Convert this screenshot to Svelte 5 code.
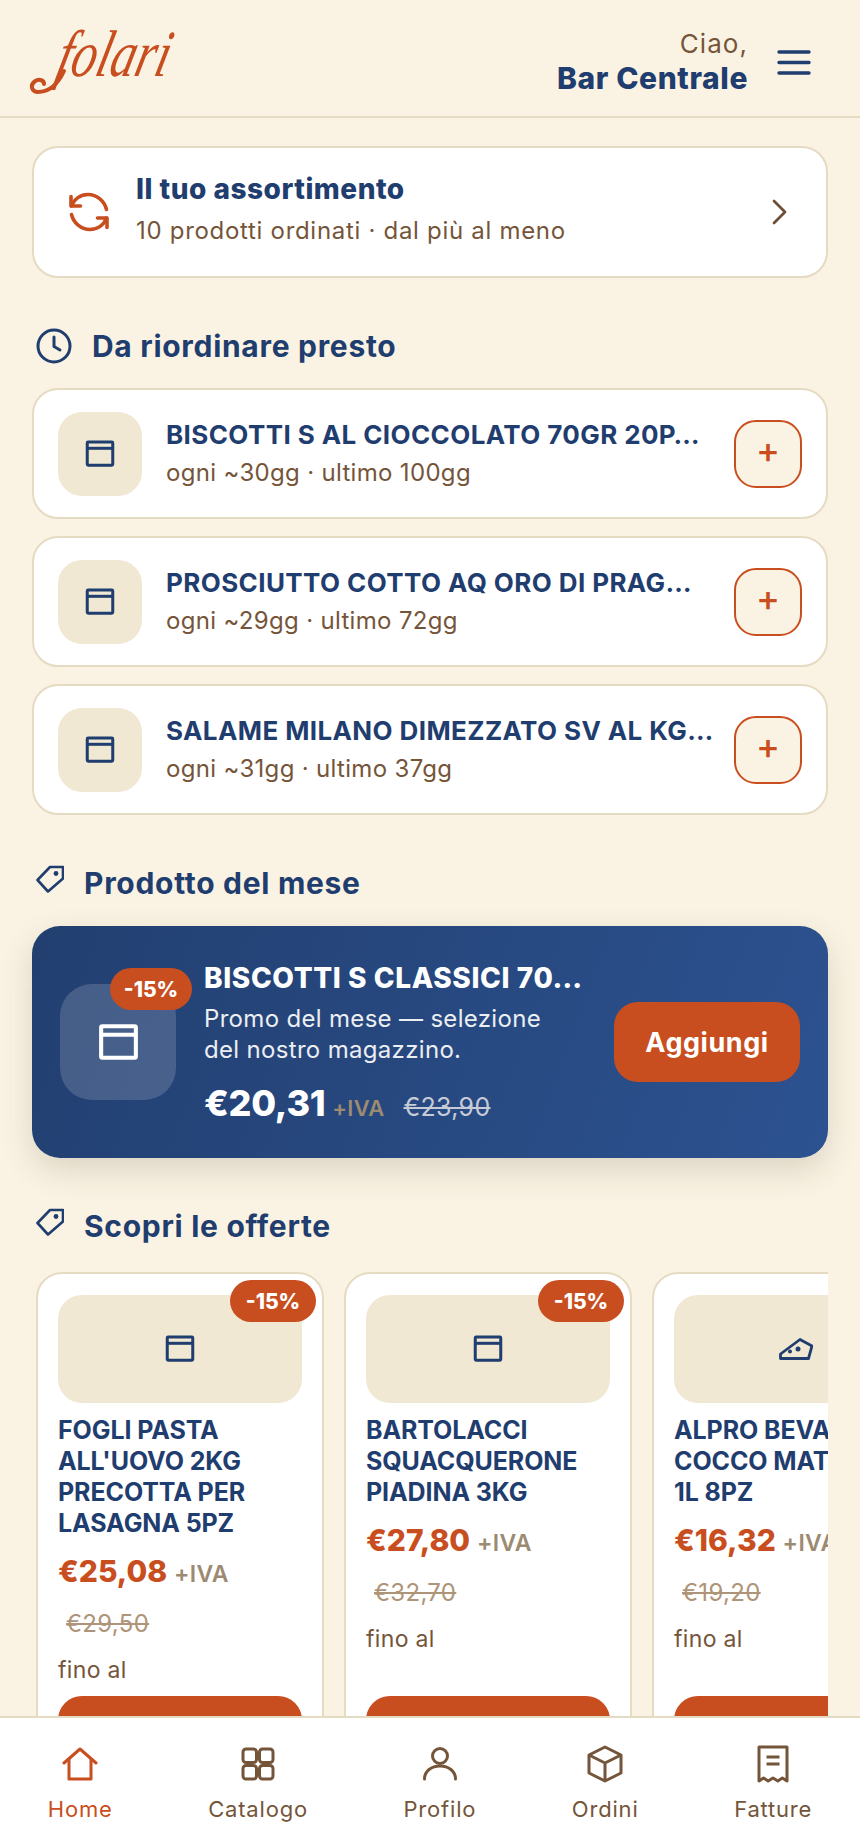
<script>
const reorder = [
  { name: "BISCOTTI S AL CIOCCOLATO 70GR 20P…", sub: "ogni ~30gg · ultimo 100gg" },
  { name: "PROSCIUTTO COTTO AQ ORO DI PRAG…", sub: "ogni ~29gg · ultimo 72gg" },
  { name: "SALAME MILANO DIMEZZATO SV AL KG…", sub: "ogni ~31gg · ultimo 37gg" }
];
const offers = [
  { name: "FOGLI PASTA ALL'UOVO 2KG PRECOTTA PER LASAGNA 5PZ", price: "€25,08", old: "€29,50", badge: "-15%", icon: "box" },
  { name: "BARTOLACCI SQUACQUERONE PIADINA 3KG", price: "€27,80", old: "€32,70", badge: "-15%", icon: "box" },
  { name: "ALPRO BEVANDA COCCO MATERIA 1L\u00a08PZ", price: "€16,32", old: "€19,20", badge: "", icon: "cheese" }
];
</script>

{#snippet box(size)}
  <svg width={size} height={size} viewBox="0 0 24 24" fill="none" stroke="currentColor" stroke-width="2" stroke-linejoin="round"><rect x="3.5" y="4" width="17" height="15.500" rx="0.6"/><path d="M3.500 8.200h17"/></svg>
{/snippet}

{#snippet tag()}
  <svg width="28" height="28" viewBox="0 0 28 28" fill="none" stroke="currentColor" stroke-width="2.6" stroke-linejoin="round"><path d="M27 2H14L1.5 15 12 26.5 27 13.5Z"/><circle cx="20" cy="8.5" r="2.4" fill="currentColor" stroke="none"/></svg>
{/snippet}

<div class="app">
  <header>
    <svg class="logo" width="146" height="72" viewBox="0 0 146 72" fill="none">
      <text x="0" y="0" transform="translate(24 52) skewX(-14)" class="logo-word" textLength="112" lengthAdjust="spacingAndGlyphs">folari</text>
      <path d="M34 47C28 60 20 68 8 68 2 68 0 62 4 58 8 54 14 56 14 60" stroke="#c84e20" stroke-width="4" stroke-linecap="round"/>
    </svg>
    <div class="hello">
      <span class="ciao">Ciao,</span>
      <strong>Bar Centrale</strong>
    </div>
    <svg class="burger" width="34" height="26" viewBox="0 0 34 26" stroke="#1f3d6e" stroke-width="3.400" stroke-linecap="round"><path d="M2 3h30M2 13.500h30M2 24h30"/></svg>
  </header>

  <main>
    <section class="assort">
      <svg class="refresh" width="42" height="42" viewBox="0 0 42 42" fill="none" stroke="#c84e20" stroke-width="3.6" stroke-linecap="round" stroke-linejoin="round">
        <path d="M3 5.5v9.5h9.5"/><path d="M3.5 15C6 8 12.500 3.500 20 3.500 29 3.500 36.500 10 38.500 18.500"/>
        <path d="M39 36.500V27h-9.500"/><path d="M38.500 27C36 34 29.500 38.500 22 38.500 13 38.500 5.500 32 3.500 23.500"/>
      </svg>
      <div class="assort-text">
        <h2>Il tuo assortimento</h2>
        <p>10 prodotti ordinati · dal più al meno</p>
      </div>
      <svg class="chev" width="18" height="26" viewBox="0 0 18 26" fill="none" stroke="#6f4e37" stroke-width="2.800" stroke-linecap="round" stroke-linejoin="round"><path d="M3 2l11 11L3 24"/></svg>
    </section>

    <h3 class="heading first">
      <svg width="36" height="36" viewBox="0 0 36 36" fill="none" stroke="currentColor" stroke-width="3" stroke-linecap="round" stroke-linejoin="round"><circle cx="18" cy="18" r="16"/><path d="M18 9v9.500l6 3.500"/></svg>
      Da riordinare presto
    </h3>

    <div class="rows">
      {#each reorder as r}
        <div class="row">
          <div class="thumb">{@render box(36)}</div>
          <div class="row-text">
            <div class="row-name">{r.name}</div>
            <div class="row-sub">{r.sub}</div>
          </div>
          <button class="plus">+</button>
        </div>
      {/each}
    </div>

    <h3 class="heading tagged month">{@render tag()} Prodotto del mese</h3>

    <section class="promo">
      <div class="promo-thumb">
        {@render box(49)}
        <span class="badge promo-badge">-15%</span>
      </div>
      <div class="promo-text">
        <div class="promo-name">BISCOTTI S CLASSICI 70…</div>
        <p>Promo del mese — selezione<br />del nostro magazzino.</p>
        <div class="promo-price"><b>€20,31</b> <span class="iva">+IVA</span> <s>€23,90</s></div>
      </div>
      <button class="promo-btn">Aggiungi</button>
    </section>

    <h3 class="heading tagged offers-head">{@render tag()} Scopri le offerte</h3>

    <div class="offers">
      {#each offers as o}
        <article class="offer">
          <div class="offer-img">
            {#if o.icon === "box"}
              {@render box(36)}
            {:else}
              <svg width="34" height="22" viewBox="0 0 34 22" fill="none" stroke="currentColor" stroke-width="2.800" stroke-linejoin="round"><path d="M1.500 20.500V16L21 1.500 33 8l-3.500 12.500Z"/><circle cx="11" cy="13.500" r="2" fill="currentColor" stroke="none"/><circle cx="19" cy="11" r="2.500" fill="currentColor" stroke="none"/></svg>
            {/if}
          </div>
          {#if o.badge}<span class="badge offer-badge">{o.badge}</span>{/if}
          <div class="offer-name">{o.name}</div>
          <div class="offer-price"><b>{o.price}</b> <span class="iva">+IVA</span></div>
          <div class="offer-old"><s>{o.old}</s></div>
          <div class="offer-until">fino al</div>
          <button class="offer-btn"></button>
        </article>
      {/each}
    </div>
  </main>

  <nav>
    <div class="tab active">
      <svg width="36" height="36" viewBox="0 0 36 36" fill="none" stroke="currentColor" stroke-width="3" stroke-linecap="round" stroke-linejoin="round"><path d="M2 17L18 3l16 14"/><path d="M7 13v20h22V13"/></svg>
      <span>Home</span>
    </div>
    <div class="tab">
      <svg width="36" height="36" viewBox="0 0 36 36" fill="none" stroke="currentColor" stroke-width="3" stroke-linejoin="round"><rect x="3" y="3" width="13.500" height="13.500" rx="3"/><rect x="19.500" y="3" width="13.500" height="13.500" rx="3"/><rect x="3" y="19.500" width="13.500" height="13.500" rx="3"/><rect x="19.500" y="19.500" width="13.500" height="13.500" rx="3"/></svg>
      <span>Catalogo</span>
    </div>
    <div class="tab">
      <svg width="36" height="36" viewBox="0 0 36 36" fill="none" stroke="currentColor" stroke-width="3" stroke-linecap="round"><circle cx="18" cy="10" r="7.500"/><path d="M2.500 33c0-8 7-13 15.500-13s15.500 5 15.500 13"/></svg>
      <span>Profilo</span>
    </div>
    <div class="tab">
      <svg width="36" height="38" viewBox="0 0 36 38" fill="none" stroke="currentColor" stroke-width="3" stroke-linejoin="round"><path d="M18 2l16 8v18l-16 8-16-8V10Z"/><path d="M2 10l16 8 16-8M18 18v18"/></svg>
      <span>Ordini</span>
    </div>
    <div class="tab">
      <svg width="32" height="38" viewBox="0 0 32 38" fill="none" stroke="currentColor" stroke-width="3" stroke-linejoin="round"><path d="M2 2h28v34l-4.600-3-4.600 3-4.800-3-4.800 3-4.600-3L2 36Z"/><path d="M9.500 12h13M9.500 19h13"/></svg>
      <span>Fatture</span>
    </div>
  </nav>
</div>

<style>
:global(body) {
  margin: 0;
  background: #faf3e3;
}
.app {
  height: 100vh;
  display: flex;
  flex-direction: column;
  overflow: hidden;
  font-family: Inter, "Open Sans", sans-serif;
  letter-spacing: 0.02em;
  color: #1f3d6e;
}
header {
  flex: none;
  height: 116px;
  display: flex;
  align-items: center;
  padding: 0 49px 0 30px;
  border-bottom: 2px solid #e5dbc3;
  box-sizing: content-box;
}
.logo {
  margin-right: auto;
  margin-top: 4px;
  overflow: visible;
}
.logo-word {
  font-family: "Liberation Serif", serif;
  font-style: italic;
  font-size: 66px;
  fill: #c84e20;
}
.hello {
  display: flex;
  flex-direction: column;
  align-items: flex-end;
  line-height: 34px;
  margin: 5px 29px 0 0;
}
.burger {
  margin-top: 7px;
}
.ciao {
  font-size: 26px;
  letter-spacing: 0.04em;
  color: #75553a;
}
.hello strong {
  font-size: 30px;
  letter-spacing: 0.6px;
  font-weight: 800;
}
main {
  flex: 1;
  min-height: 0;
  overflow: hidden;
  padding: 28px 32px 0;
}
.assort {
  height: 132px;
  box-sizing: border-box;
  display: flex;
  align-items: center;
  background: #fff;
  border: 2px solid #e5dbc3;
  border-radius: 26px;
  padding: 0 37px 0 34px;
}
.assort-text {
  flex: 1;
  margin: 0 0 4px 26px;
}
.assort h2 {
  margin: 0;
  font-size: 28px;
  letter-spacing: 0.5px;
  line-height: 36px;
  font-weight: 800;
}
.assort p {
  margin: 6px 0 0;
  font-size: 24px;
  letter-spacing: 0.7px;
  line-height: 36px;
  color: #75553a;
}
.heading {
  display: flex;
  align-items: center;
  margin: 0;
  font-size: 30px;
  letter-spacing: 0.7px;
  line-height: 40px;
  font-weight: 650;
}
.heading.first {
  gap: 20px;
  margin: 48px 0 0 4px;
}
.heading.tagged {
  gap: 20px;
  margin-left: 4px;
}
.heading.tagged svg {
  transform: translateY(-4px);
}
.rows {
  display: flex;
  flex-direction: column;
  gap: 17px;
  margin-top: 22px;
}
.row {
  height: 131px;
  box-sizing: border-box;
  display: flex;
  align-items: center;
  background: #fff;
  border: 2px solid #e5dbc3;
  border-radius: 26px;
  padding: 0 24px;
}
.thumb {
  flex: none;
  width: 84px;
  height: 84px;
  border-radius: 24px;
  background: #f1e8d3;
  display: flex;
  align-items: center;
  justify-content: center;
}
.row-text {
  flex: 1;
  min-width: 0;
  margin: 0 26px 0 24px;
}
.row-name {
  font-size: 26px;
  letter-spacing: 0.4px;
  line-height: 38px;
  font-weight: 700;
  white-space: nowrap;
}
.row-sub {
  margin-top: 1px;
  font-size: 24px;
  line-height: 36px;
  color: #75553a;
}
.plus {
  flex: none;
  width: 68px;
  height: 68px;
  border: 2px solid #c84e20;
  border-radius: 22px;
  background: #faf3e3;
  color: #c84e20;
  font: 500 36px/1 Inter, sans-serif;
  padding: 0 0 8px;
}
.month {
  margin-top: 48px;
}
.promo {
  position: relative;
  margin-top: 23px;
  height: 232px;
  box-sizing: border-box;
  display: flex;
  align-items: center;
  border-radius: 28px;
  background: linear-gradient(110deg, #223f70, #2c5290);
  box-shadow: 0 12px 32px rgba(60, 50, 30, 0.16);
  padding: 0 28px;
  color: #fff;
}
.promo-thumb {
  position: relative;
  flex: none;
  width: 116px;
  height: 116px;
  border-radius: 32px;
  background: rgba(255, 255, 255, 0.16);
  display: flex;
  align-items: center;
  justify-content: center;
}
.badge {
  position: absolute;
  background: #c84e20;
  color: #fff;
  font-weight: 800;
  font-size: 21px;
  letter-spacing: 0;
  display: flex;
  align-items: center;
  justify-content: center;
  height: 42px;
  border-radius: 21px;
}
.promo-badge {
  top: -16px;
  right: -16px;
  width: 82px;
}
.promo-text {
  flex: 1;
  min-width: 0;
  margin: 6px 22px 0 28px;
}
.promo-name {
  font-size: 28px;
  line-height: 38px;
  font-weight: 800;
  letter-spacing: 0.6px;
  white-space: nowrap;
}
.promo-text p {
  margin: 6px 0 0;
  font-size: 24px;
  line-height: 31px;
  color: #eceef2;
}
.promo-price {
  margin-top: 16px;
  line-height: 44px;
}
.promo-price b {
  font-size: 36px;
  font-weight: 800;
  letter-spacing: -0.3px;
}
.promo-price .iva {
  font-size: 22px;
  font-weight: 600;
  color: #9c8a72;
}
.promo-price s {
  margin-left: 14px;
  font-size: 25px;
  color: #c6cbd6;
}
.promo-btn {
  flex: none;
  width: 186px;
  height: 80px;
  border: 0;
  border-radius: 24px;
  background: #c84e20;
  color: #fff;
  font: 700 27px/1 Inter, sans-serif;
  letter-spacing: 0.02em;
}
.offers-head {
  margin-top: 48px;
}
.offers {
  display: flex;
  gap: 20px;
  margin: 26px 0 0;
  padding: 0 0 0 4px;
  width: 792px;
  overflow: hidden;
}
.offer {
  position: relative;
  flex: none;
  width: 288px;
  box-sizing: border-box;
  display: flex;
  flex-direction: column;
  background: #fff;
  border: 2px solid #e5dbc3;
  border-radius: 26px;
  padding: 21px 20px 22px;
}
.offer-img {
  height: 108px;
  border-radius: 24px;
  background: #f1e8d3;
  display: flex;
  align-items: center;
  justify-content: center;
}
.offer-badge {
  top: 6px;
  right: 6px;
  width: 86px;
}
.offer-name {
  margin-top: 12px;
  font-size: 25px;
  letter-spacing: -0.1px;
  line-height: 31px;
  font-weight: 700;
}
.offer-price {
  margin-top: 12px;
  line-height: 40px;
  color: #c84e20;
}
.offer-price b {
  font-size: 30px;
  font-weight: 800;
  letter-spacing: 0;
}
.iva {
  font-size: 23px;
  font-weight: 600;
  color: #9c8a72;
  margin-left: 2px;
}
.offer-old {
  margin: 10px 0 0 8px;
  font-size: 24px;
  line-height: 36px;
  color: #ae9478;
}
.offer-until {
  margin-top: 10px;
  font-size: 23px;
  line-height: 36px;
  color: #75553a;
}
.offer-btn {
  margin-top: 8px;
  height: 64px;
  flex: none;
  border: 0;
  border-radius: 24px;
  background: #c84e20;
}
.offers .offer:not(:first-child) .offer-btn {
  margin-top: auto;
}
nav {
  flex: none;
  height: 130px;
  display: flex;
  justify-content: space-around;
  align-items: flex-start;
  background: #fff;
  border-top: 2px solid #e5dbc3;
  color: #75553a;
}
.tab {
  display: flex;
  flex-direction: column;
  align-items: center;
  padding-top: 27px;
}
.tab svg {
  height: 38px;
}
.tab span {
  margin-top: 10px;
  font-size: 22px;
  letter-spacing: 0.8px;
  line-height: 32px;
}
.tab.active {
  color: #c84e20;
}
</style>
